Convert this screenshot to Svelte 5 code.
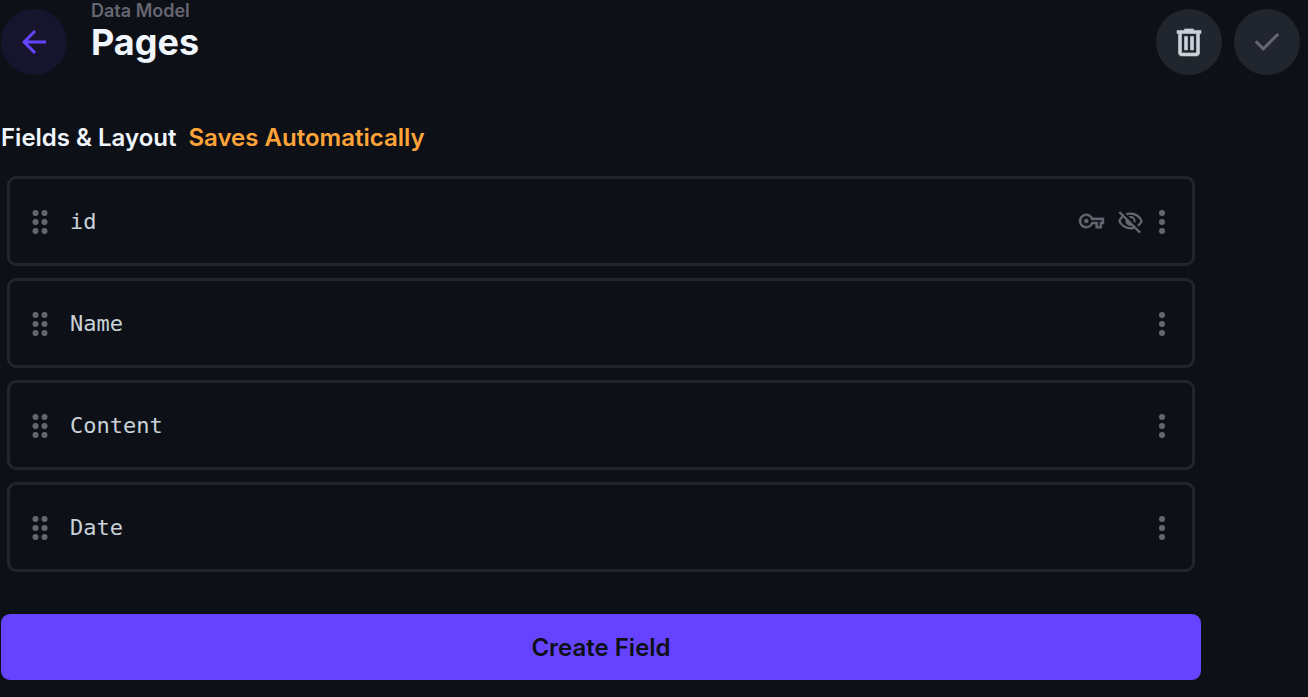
<script>
  const fields = [
    { name: 'id', key: true, hidden: true },
    { name: 'Name' },
    { name: 'Content' },
    { name: 'Date' }
  ];
</script>

<div class="page">
  <header>
    <button class="round back" aria-label="Back">
      <svg viewBox="0 0 24 24" class="icon"><path d="m7.825 13 5.6 5.6L12 20l-8-8 8-8 1.425 1.4-5.6 5.6H20v2z" /></svg>
    </button>
    <div class="titles">
      <a href="#data-model">Data Model</a>
      <h1>Pages</h1>
    </div>
    <div class="actions">
      <button class="round delete" aria-label="Delete collection">
        <svg viewBox="0 -0.3 24 24" class="icon heavy"><path d="M7 21q-.825 0-1.412-.587T5 19V6H4V4h5V3h6v1h5v2h-1v13q0 .825-.587 1.413T17 21zM17 6H7v13h10zM9 17h2V8H9zm4 0h2V8h-2z" /></svg>
      </button>
      <button class="round save" aria-label="Save" disabled>
        <svg viewBox="0 0 24 24" class="icon"><path d="m9.55 18-5.7-5.7 1.425-1.425L9.55 15.15l9.175-9.175L20.15 7.4z" /></svg>
      </button>
    </div>
  </header>

  <main>
    <h2>Fields &amp; Layout <span>Saves Automatically</span></h2>
    <ul>
      {#each fields as field}
        <li>
          <svg viewBox="0 0 24 24" class="icon">
            {#each [6, 12, 18] as y}
              <circle cx="9" cy={y} r="2" /><circle cx="15" cy={y} r="2" />
            {/each}
          </svg>
          <span class="name">{field.name}</span>
          <div class="marks">
            {#if field.key}
              <svg viewBox="-1 -0.5 26 26" class="icon small heavy"><path d="M22 19h-6v-4h-2.68c-1.14 2.42-3.6 4-6.32 4-3.86 0-7-3.14-7-7s3.14-7 7-7c2.72 0 5.17 1.58 6.32 4H24v6h-2v4zm-4-2h2v-4h2v-2H11.94l-.23-.67C11.01 8.34 9.11 7 7 7c-2.76 0-5 2.24-5 5s2.24 5 5 5c2.11 0 4.01-1.34 4.71-3.33l.23-.67H18v4z" /><circle cx="7" cy="12" r="2" /></svg>
            {/if}
            {#if field.hidden}
              <svg viewBox="0 0 24 24" class="icon small"><path d="m16.1 13.3-1.45-1.45q.225-1.175-.675-2.2t-2.325-.8L10.2 7.4q.425-.2.863-.3T12 7q1.875 0 3.188 1.313T16.5 11.5q0 .5-.1.938t-.3.862m3.2 3.15-1.45-1.4q.95-.725 1.688-1.587T20.8 11.5q-1.25-2.525-3.588-4.012T12 6q-.725 0-1.425.1T9.2 6.4L7.65 4.85q1.025-.425 2.1-.637T12 4q3.775 0 6.725 2.087T23 11.5q-.575 1.475-1.513 2.738T19.3 16.45m.5 6.15-4.2-4.15q-.875.275-1.762.413T12 19q-3.775 0-6.725-2.087T1 11.5q.525-1.325 1.325-2.463T4.15 7L1.4 4.2l1.4-1.4 18.4 18.4zM5.55 8.4q-.725.65-1.325 1.425T3.2 11.5q1.25 2.525 3.588 4.013T12 17q.5 0 .975-.062t.975-.138l-.9-.95q-.275.075-.525.113T12 16q-1.875 0-3.187-1.312T7.5 11.5q0-.275.038-.525t.112-.525z" /></svg>
            {/if}
            <button class="more" aria-label="{field.name} options">
              <svg viewBox="0 0 24 24" class="icon">
                <circle cx="12" cy="6" r="2" /><circle cx="12" cy="12" r="2" /><circle cx="12" cy="18" r="2" />
              </svg>
            </button>
          </div>
        </li>
      {/each}
    </ul>
    <button class="create">Create Field</button>
  </main>
</div>

<style>
  :global(body) {
    background: #0d1117;
  }

  .page {
    padding: 9px 8px 16px 1px;
    font-family: Inter, sans-serif;
    color: #f0f6fc;
  }

  button {
    border: 0;
    padding: 0;
    font: inherit;
    cursor: pointer;
  }

  .icon {
    display: block;
    flex: none;
    width: 36px;
    height: 36px;
    fill: currentColor;
  }

  .heavy {
    stroke: currentColor;
    stroke-width: 0.4;
  }

  .small {
    width: 27px;
    height: 27px;
    margin-bottom: 2px;
  }

  header {
    display: flex;
    align-items: center;
    height: 66px;
  }

  .round {
    display: grid;
    place-items: center;
    width: 66px;
    height: 66px;
    border-radius: 50%;
    background: #21262e;
    color: #c9d1d9;
  }

  .back {
    background: #16152d;
    color: #6644ff;
  }

  .save {
    color: #666672;
  }

  .titles {
    flex: 1;
    margin: -22px 0 0 24px;
  }

  .titles a {
    display: block;
    font-size: 18px;
    line-height: 22px;
    font-weight: 600;
    color: #666672;
    text-decoration: none;
  }

  h1 {
    margin: 0;
    font-size: 36px;
    line-height: 40px;
    font-weight: 700;
  }

  .actions {
    display: flex;
    gap: 12px;
  }

  main {
    max-width: 1200px;
    margin-top: 48px;
  }

  h2 {
    margin: 0;
    font-size: 24px;
    line-height: 30px;
    font-weight: 600;
  }

  h2 span {
    margin-left: 6px;
    color: #ffa439;
  }

  ul {
    display: grid;
    gap: 12px;
    margin: 0;
    padding: 23px 6px 42px;
    list-style: none;
  }

  li {
    display: flex;
    align-items: center;
    gap: 12px;
    box-sizing: border-box;
    height: 90px;
    padding: 2px 12px 0;
    border: 3px solid #21262e;
    border-radius: 9px;
    color: #666672;
  }

  .name {
    flex: 1;
    font-family: "DejaVu Sans Mono", monospace;
    font-size: 22px;
    line-height: 30px;
    color: #c9d1d9;
  }

  .marks {
    display: flex;
    align-items: center;
  }

  .small + .small {
    margin-left: 12px;
  }

  .more {
    background: none;
    color: inherit;
  }

  .create {
    display: block;
    width: 100%;
    height: 66px;
    border-radius: 9px;
    background: #6644ff;
    color: #0d1117;
    font-size: 24px;
    font-weight: 600;
  }
</style>
